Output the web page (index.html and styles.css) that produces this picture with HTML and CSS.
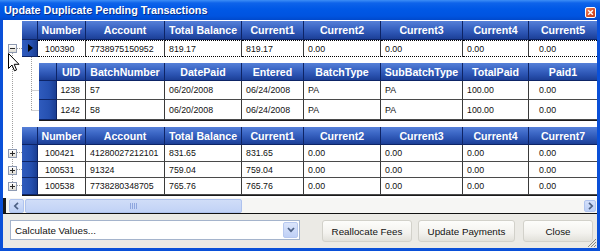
FILE: index.html
```html
<!DOCTYPE html>
<html>
<head>
<meta charset="utf-8">
<link rel="stylesheet" href="styles.css">
</head>
<body>
<div class="window">
  <div class="titlebar">
    <span class="title">Update Duplicate Pending Transactions</span>
    <span class="close"><svg width="9" height="9" viewBox="0 0 9 9"><path d="M1.5 1.5 L7.5 7.5 M7.5 1.5 L1.5 7.5" stroke="#fff" stroke-width="1.8"/></svg></span>
  </div>
  <div class="client">
    <div class="gridarea">
      <svg class="treelines" width="40" height="178" viewBox="0 0 40 178">
        <g stroke="#a0a0a0" stroke-width="1" stroke-dasharray="1 1" fill="none">
          <path d="M9.5 33 V162"/>
          <path d="M14 28.5 H19"/>
          <path d="M14 132.5 H19"/>
          <path d="M14 149.5 H19"/>
          <path d="M14 165.5 H19"/>
          <path d="M28.5 37 V90"/>
          <path d="M28.5 70.5 H36"/>
          <path d="M28.5 90.5 H36"/>
        </g>
      </svg>
      <div class="band band-top">
        <div class="gutter">
          <div class="g-head"></div>
          <div class="g-row r17"><span class="exp"></span></div>
        </div>
        <div class="table cols-parent top">
          <div class="hc"></div><div class="hc">Number</div><div class="hc">Account</div><div class="hc">Total Balance</div><div class="hc">Current1</div><div class="hc">Current2</div><div class="hc">Current3</div><div class="hc">Current4</div><div class="hc last">Current5</div>
          <div class="sel active"><span class="tri"></span></div><div class="dc sel-row pad-num">100390</div><div class="dc sel-row">7738975150952</div><div class="dc sel-row">819.17</div><div class="dc sel-row">819.17</div><div class="dc sel-row">0.00</div><div class="dc sel-row">0.00</div><div class="dc sel-row">0.00</div><div class="dc sel-row last pad-last">0.00</div>
        </div>
      </div>
      <div class="band band-child">
        <div class="table cols-child child">
          <div class="hc"></div><div class="hc">UID</div><div class="hc">BatchNumber</div><div class="hc">DatePaid</div><div class="hc">Entered</div><div class="hc">BatchType</div><div class="hc">SubBatchType</div><div class="hc">TotalPaid</div><div class="hc last">Paid1</div>
          <div class="sel"></div><div class="dc right">1238</div><div class="dc">57</div><div class="dc">06/20/2008</div><div class="dc">06/24/2008</div><div class="dc">PA</div><div class="dc">PA</div><div class="dc">100.00</div><div class="dc last pad-last">0.00</div>
          <div class="sel"></div><div class="dc right">1242</div><div class="dc">58</div><div class="dc">06/20/2008</div><div class="dc">06/24/2008</div><div class="dc">PA</div><div class="dc">PA</div><div class="dc">100.00</div><div class="dc last pad-last">0.00</div>
        </div>
      </div>
      <div class="band band-bottom">
        <div class="gutter">
          <div class="g-head h18"></div>
          <div class="g-row r17"><span class="exp plus"></span></div>
          <div class="g-row r16"><span class="exp plus"></span></div>
          <div class="g-row r17"><span class="exp plus"></span></div>
        </div>
        <div class="table cols-parent bottom">
          <div class="hc"></div><div class="hc">Number</div><div class="hc">Account</div><div class="hc">Total Balance</div><div class="hc">Current1</div><div class="hc">Current2</div><div class="hc">Current3</div><div class="hc">Current4</div><div class="hc last">Current7</div>
          <div class="sel"></div><div class="dc pad-num">100421</div><div class="dc">41280027212101</div><div class="dc">831.65</div><div class="dc">831.65</div><div class="dc">0.00</div><div class="dc">0.00</div><div class="dc">0.00</div><div class="dc last pad-last">0.00</div>
          <div class="sel"></div><div class="dc pad-num">100531</div><div class="dc">91324</div><div class="dc">759.04</div><div class="dc">759.04</div><div class="dc">0.00</div><div class="dc">0.00</div><div class="dc">0.00</div><div class="dc last pad-last">0.00</div>
          <div class="sel"></div><div class="dc pad-num">100538</div><div class="dc">7738280348705</div><div class="dc">765.76</div><div class="dc">765.76</div><div class="dc">0.00</div><div class="dc">0.00</div><div class="dc">0.00</div><div class="dc last pad-last">0.00</div>
        </div>
      </div>
      <svg class="cursor" width="13" height="20" viewBox="0 0 13 20"><path d="M0.5 0.5 L0.5 15.5 L4 12 L6.5 17.8 L8.6 16.9 L6.2 11.3 L11 11.3 Z" fill="#fff" stroke="#000" stroke-width="1" stroke-linejoin="miter"/></svg>
    </div>
    <div class="hscroll">
      <span class="sb-mark"></span>
      <span class="sb-btn sb-left"><svg width="7" height="8" viewBox="0 0 7 8"><path d="M5 0.8 L1.8 4 L5 7.2" stroke="#4d6185" stroke-width="1.7" fill="none"/></svg></span>
      <span class="sb-thumb"><span class="grip"></span></span>
      <span class="sb-track"></span>
      <span class="sb-btn sb-right"><svg width="7" height="8" viewBox="0 0 7 8"><path d="M2 0.8 L5.2 4 L2 7.2" stroke="#4d6185" stroke-width="1.7" fill="none"/></svg></span>
    </div>
    <div class="panel">
      <div class="combo">
        <span class="combo-text">Calculate Values...</span>
        <span class="combo-btn"><svg width="8" height="6" viewBox="0 0 8 6"><path d="M1 1 L4 4.2 L7 1" stroke="#4d6185" stroke-width="1.7" fill="none"/></svg></span>
      </div>
      <div class="buttons">
        <button class="btn b-realloc">Reallocate Fees</button>
        <button class="btn b-update">Update Payments</button>
        <button class="btn b-close">Close</button>
      </div>
      <svg class="grip-corner" width="10" height="10" viewBox="0 0 10 10"><g stroke="#8a8a80" stroke-width="1"><path d="M9 1 L1 9 M9 4 L4 9 M9 7 L7 9"/></g></svg>
    </div>
  </div>
</div>
</body>
</html>
```
FILE: styles.css
```css
* { box-sizing: border-box; }
html, body { margin: 0; padding: 0; }
body {
  width: 600px;
  height: 251px;
  overflow: hidden;
  font-family: "Liberation Sans", Arial, sans-serif;
}
.window {
  width: 600px;
  height: 251px;
  background: #0a50d8;
  display: flex;
  flex-direction: column;
}
.titlebar {
  height: 20px;
  flex: none;
  display: flex;
  align-items: flex-start;
  justify-content: space-between;
  padding: 5px 4px 0 4px;
  background: linear-gradient(#3d8ef6 0, #0e63ea 3px, #0058e6 45%, #0054e0 80%, #0049cc 100%);
}
.title {
  color: #fff;
  font-weight: bold;
  font-size: 10.8px;
  line-height: 11px;
  text-shadow: 1px 1px 0 #0b2f8a;
}
.close {
  width: 11px;
  height: 11px;
  margin-top: 2px;
  border: 1px solid #fff;
  border-radius: 2px;
  background: linear-gradient(135deg, #ef8a66, #d9542e 50%, #c23c18);
  display: flex;
  align-items: center;
  justify-content: center;
}
.close svg { width: 7px; height: 7px; }
.client {
  flex: 1;
  display: flex;
  flex-direction: column;
  margin: 0 3px 3px 3px;
  background: #fff;
}
.gridarea {
  position: relative;
  height: 178px;
  flex: none;
  padding-top: 1px;
  display: flex;
  flex-direction: column;
}
.treelines { position: absolute; left: 0; top: 0; }
.cursor { position: absolute; left: 5px; top: 33px; }
.band { display: flex; flex: none; }
.band-top { margin-bottom: 6px; }
.band-child { margin-left: 36px; margin-bottom: 6px; }
.gutter {
  width: 19px;
  flex: none;
  display: flex;
  flex-direction: column;
}
.g-head { height: 19px; }
.g-head.h18 { height: 18px; }
.g-row { display: flex; align-items: center; padding-left: 5px; }
.r17 { height: 17px; }
.r16 { height: 16px; }
.exp {
  position: relative;
  width: 9px;
  height: 9px;
  border: 1px solid #8e9ab2;
  background: linear-gradient(#ffffff, #dedcd4);
}
.exp::before {
  content: "";
  position: absolute;
  left: 1px;
  top: 3px;
  width: 5px;
  height: 1px;
  background: #2a2a2a;
}
.exp.plus::after {
  content: "";
  position: absolute;
  left: 3px;
  top: 1px;
  width: 1px;
  height: 5px;
  background: #2a2a2a;
}
.table {
  display: grid;
  border-bottom: 1px solid #1a1a1a;
}
.cols-parent { grid-template-columns: 16px 48px 79px 77px 62px 77px 82px 66px 68px; }
.cols-child { grid-template-columns: 18px 29px 79px 77px 62px 77px 82px 66px 68px; }
.top { grid-template-rows: 19px 17px; border-bottom: none; }
.child { grid-template-rows: 18px 19px 20px; }
.bottom { grid-template-rows: 18px 17px 16px 17px; }
.hc {
  background: linear-gradient(#5680d8 0, #3d68c6 35%, #2a52b0 70%, #1c3f96 100%);
  color: #fff;
  font-weight: bold;
  font-size: 10.6px;
  display: flex;
  align-items: center;
  justify-content: center;
  border-right: 1px solid #0d2466;
  border-bottom: 1px solid #0d2466;
  white-space: nowrap;
  overflow: hidden;
}
.hc.last { border-right: none; }
.sel {
  background: linear-gradient(90deg, #2f5bbd, #2550b0 60%, #1b3e92);
  border-right: 1px solid #0d2466;
  border-bottom: 1px solid #0d2466;
  display: flex;
  align-items: center;
  padding-left: 6px;
}
.tri {
  width: 0;
  height: 0;
  border-top: 4px solid transparent;
  border-bottom: 4px solid transparent;
  border-left: 5px solid #000;
}
.dc {
  font-size: 8.8px;
  color: #111;
  display: flex;
  align-items: center;
  padding-left: 4px;
  border-right: 1px solid #3a3a3a;
  border-bottom: 1px solid #4a4a4a;
  white-space: nowrap;
  overflow: hidden;
}
.dc.last { border-right: none; }
.dc.right { justify-content: flex-end; padding-right: 5px; }
.pad-num { padding-left: 7px; }
.pad-last { padding-left: 10px; }
.sel-row {
  border-top: 1px dotted #000;
  border-bottom: 1px dotted #000;
}
.hscroll {
  height: 16px;
  flex: none;
  display: flex;
  align-items: center;
  border-bottom: 1px solid #111;
  background: #f6f6f4;
}
.sb-mark {
  width: 3px;
  height: 15px;
  background: #1a1a1a;
  margin-right: 3px;
}
.sb-btn {
  display: flex;
  align-items: center;
  justify-content: center;
  background: linear-gradient(#d4e0fa, #bccff5);
  border: 1px solid #b0c4ee;
  border-radius: 2px;
}
.sb-left { width: 15px; height: 14px; }
.sb-right { width: 12px; height: 12px; margin-right: 1px; }
.sb-thumb {
  width: 217px;
  height: 14px;
  margin-left: 1px;
  background: linear-gradient(#d0ddf8, #c1d2f6);
  border: 1px solid #aec2ee;
  border-radius: 2px;
  display: flex;
  align-items: center;
  justify-content: center;
}
.grip {
  width: 7px;
  height: 6px;
  background: repeating-linear-gradient(90deg, #8ea6de 0 1px, transparent 1px 2px);
}
.sb-track { flex: 1; height: 14px; }
.panel {
  position: relative;
  flex: 1;
  background: #ebeae5;
  display: flex;
  align-items: flex-start;
  padding: 6px 4px 0 7px;
}
.combo {
  width: 290px;
  height: 20px;
  background: #fff;
  border: 1px solid #a5b4cc;
  display: flex;
  align-items: center;
  justify-content: space-between;
  padding: 0 1px 0 4px;
}
.combo-text { font-size: 9.8px; color: #111; }
.combo-btn {
  width: 15px;
  height: 16px;
  background: linear-gradient(#dbe5fb, #bfd0f6);
  border: 1px solid #b7c8ef;
  border-radius: 2px;
  display: flex;
  align-items: center;
  justify-content: center;
}
.buttons {
  margin-left: auto;
  display: flex;
  gap: 6px;
}
.btn {
  height: 22px;
  font-family: "Liberation Sans", Arial, sans-serif;
  font-size: 9.8px;
  color: #111;
  background: linear-gradient(#fdfdfb, #f3f2ee 60%, #e2e1da);
  border: 1px solid #d2d1ca;
  border-radius: 3px;
  padding: 0;
}
.b-realloc { width: 90px; }
.b-update { width: 97px; margin-right: 2px; }
.b-close { width: 70px; }
.grip-corner { position: absolute; right: 0; bottom: 0; }
```
